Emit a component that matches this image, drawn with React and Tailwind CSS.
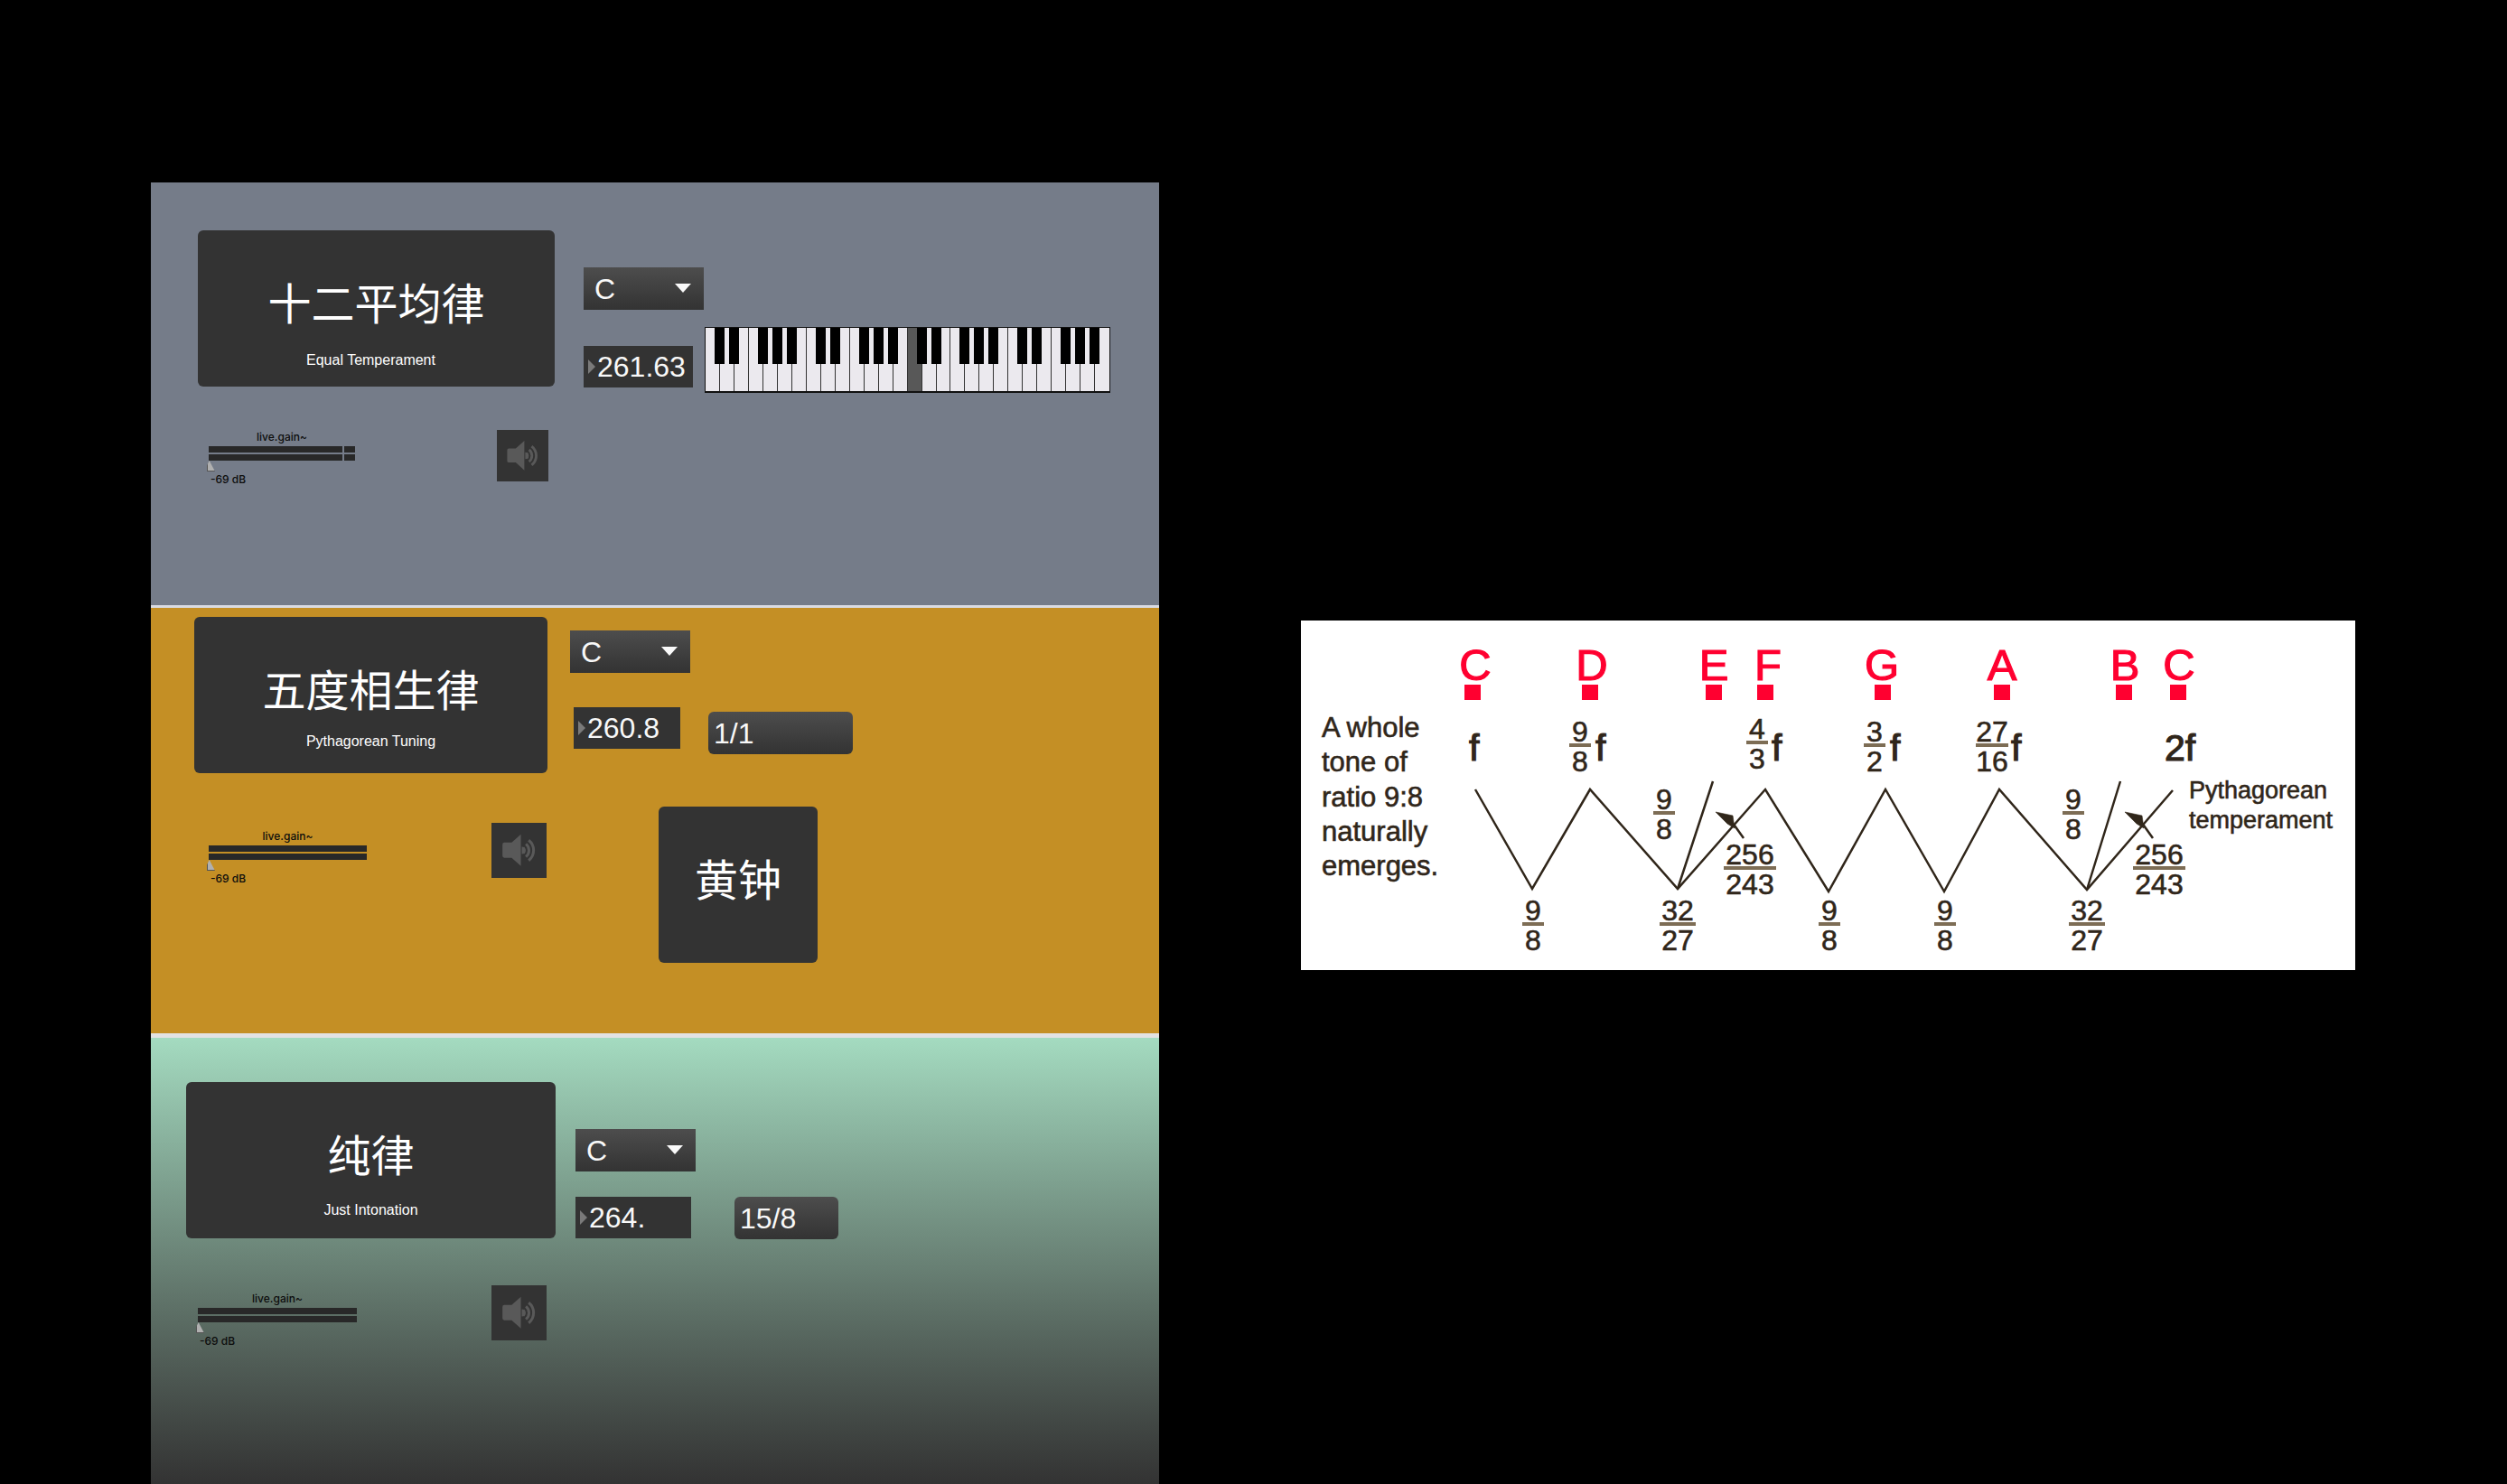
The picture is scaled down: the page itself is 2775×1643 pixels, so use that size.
import React, { useState } from "react";

const HANZI = "font-['Noto_Sans_CJK_SC',sans-serif]";

function TitleCard({ title, subtitle, className, subtitleClass }) {
  return (
    <div className={`flex h-[173px] flex-col items-center rounded-md bg-[#333] pt-12 text-white ${className}`}>
      <h2 className={`text-[48px] leading-[60px] font-normal ${HANZI}`}>{title}</h2>
      {subtitle && <p className={`text-base leading-5 ${subtitleClass}`}>{subtitle}</p>}
    </div>
  );
}

function Gain({ name, className, split }) {
  const bar = (
    <div className="flex h-[7px] gap-[2px]">
      <span className="flex-1 bg-[#282828]" />
      {split && <span className="w-3 bg-[#282828]" />}
    </div>
  );
  return (
    <div className={`text-xs leading-4 font-medium text-[#0c0c0c] font-[Inter,sans-serif] ${className}`}>
      <label htmlFor={name} className="mb-[2px] block text-center">live.gain~</label>
      <div className="flex flex-col gap-[2px]">
        {bar}
        {bar}
      </div>
      <input
        id={name}
        type="range"
        min="-69"
        max="6"
        defaultValue="-69"
        className="-ml-[2px] block h-3 w-full appearance-none bg-transparent [&::-webkit-slider-thumb]:h-3 [&::-webkit-slider-thumb]:w-[9px] [&::-webkit-slider-thumb]:appearance-none [&::-webkit-slider-thumb]:border-b [&::-webkit-slider-thumb]:border-l [&::-webkit-slider-thumb]:border-[#555] [&::-webkit-slider-thumb]:bg-[linear-gradient(62deg,#b0b0b0_58%,#555_60%)] [&::-webkit-slider-thumb]:[clip-path:polygon(0_100%,0_45%,30%_0,100%_100%)]"
      />
      <output htmlFor={name} className="ml-[2px] block pt-px">-69 dB</output>
    </div>
  );
}

function Speaker({ className }) {
  return (
    <button type="button" aria-label="Toggle audio" className={`shrink-0 bg-[#333] ${className}`}>
      <svg viewBox="0 0 60 60" className="size-full" aria-hidden="true">
        <path d="M14 21.500h8L32 12.500v34.500L22 38H14q-2 0-2-2V23.500q0-2 2-2z" fill="#595959" />
        <path d="M33 26a4 4 0 0 1 0 8z" fill="#595959" />
        <g fill="none" stroke="#595959" strokeWidth="3">
          <path d="M37.500 23a9 9 0 0 1 0 14" />
          <path d="M40.500 19a14 14 0 0 1 0 22" />
          <path d="M35 26.500a5 5 0 0 1 0 7" strokeWidth="1.500" />
        </g>
      </svg>
    </button>
  );
}

function NoteSelect({ label, className }) {
  return (
    <div className={`relative h-[47px] w-[133px] ${className}`}>
      <select
        aria-label={label}
        defaultValue="C"
        className="size-full appearance-none bg-linear-to-b from-[#4d4d4d] to-[#333] pl-3 text-[32px] text-[#f8f8f8]"
      >
        {["C", "D", "E", "F", "G", "A", "B"].map((n) => (
          <option key={n}>{n}</option>
        ))}
      </select>
      <svg viewBox="0 0 18 10" className="pointer-events-none absolute top-[18px] right-[14px] h-[10px] w-[18px]" aria-hidden="true">
        <path d="M0 0h18L9 10z" fill="#fafafa" />
      </svg>
    </div>
  );
}

function NumberBox({ label, value, className }) {
  return (
    <label className={`flex h-[46px] shrink-0 items-center bg-[#333] pl-[5px] ${className}`}>
      <svg viewBox="0 0 8 16" className="h-4 w-2 shrink-0" aria-hidden="true">
        <path d="M0 0L8 8L0 16z" fill="#7a7a7a" />
      </svg>
      <input
        aria-label={label}
        defaultValue={value}
        className="ml-[2px] h-full w-full min-w-0 bg-transparent text-[32px] text-[#f8f8f8]"
      />
    </label>
  );
}

function RatioBox({ value, className }) {
  return (
    <input
      aria-label="Frequency ratio"
      defaultValue={value}
      className={`h-[47px] rounded-md bg-linear-to-b from-[#4d4d4d] to-[#333] pl-[6px] text-[32px] text-[#f8f8f8] ${className}`}
    />
  );
}

const NOTES = ["C", "D", "E", "F", "G", "A", "B"];
const SHARPS = ["C", "D", "F", "G", "A"];

function Keyboard() {
  const [active, setActive] = useState(14);
  return (
    <div className="flex h-[73px] min-w-0 flex-1 border border-b-2 border-[#111] bg-[#ebe9ee]">
      {Array.from({ length: 28 }, (_, i) => {
        const note = NOTES[i % 7];
        return (
          <div key={i} className="relative min-w-0 flex-1">
            <button
              type="button"
              aria-label={`${note}${Math.floor(i / 7) + 2}`}
              aria-pressed={active === i}
              onClick={() => setActive(i)}
              className={`block size-full ${i < 27 ? "border-r border-[#333]" : ""} ${active === i ? "bg-[#585858]" : "bg-[#ebe9ee]"}`}
            />
            {SHARPS.includes(note) && (
              <button
                type="button"
                aria-label={`${note} sharp ${Math.floor(i / 7) + 2}`}
                className="absolute top-0 -right-[5px] z-10 h-10 w-[11px] bg-black"
              />
            )}
          </div>
        );
      })}
    </div>
  );
}

function Fraction({ x, y, top, bottom, half = 12 }) {
  return (
    <g textAnchor="middle" fontSize="32">
      <text x={x} y={y - 4}>{top}</text>
      <rect x={x - half} y={y - 2} width={half * 2} height="4" fill="#7d6d55" stroke="none" />
      <text x={x} y={y + 29}>{bottom}</text>
    </g>
  );
}

const DEGREES = [
  ["C", 193, 190],
  ["D", 322, 320],
  ["E", 457, 457],
  ["F", 517, 514],
  ["G", 643, 644],
  ["A", 776, 776],
  ["B", 912, 911],
  ["C", 972, 971],
];

function PythagoreanDiagram() {
  return (
    <svg
      viewBox="0 0 1167 387"
      className="block w-full bg-white"
      role="img"
      aria-label="Pythagorean temperament intervals"
      fontFamily="'Liberation Sans', Arial, sans-serif"
      fill="#30261a"
      stroke="#30261a"
      strokeWidth="0.6"
    >
      <g fill="#ff0030" stroke="#ff0030" strokeWidth="1.2">
        {DEGREES.map(([n, x, sx], i) => (
          <g key={i}>
            <text x={x} y="66" fontSize="49" textAnchor="middle">{n}</text>
            <rect x={sx - 9} y="71" width="18" height="17" stroke="none" />
          </g>
        ))}
      </g>
      <g fontSize="31">
        {["A whole", "tone of", "ratio 9:8", "naturally", "emerges."].map((t, i) => (
          <text key={t} x="23" y={129 + Math.round(i * 38.3)}>{t}</text>
        ))}
      </g>
      <g fontSize="27">
        <text x="983" y="197">Pythagorean</text>
        <text x="983" y="230">temperament</text>
      </g>
      <g fontSize="41" strokeWidth="1.2">
        <text x="186" y="155">f</text>
        <text x="326" y="155">f</text>
        <text x="521" y="155">f</text>
        <text x="652" y="155">f</text>
        <text x="786" y="155">f</text>
        <text x="956" y="155">2f</text>
      </g>
      <Fraction x={309} y={138} top="9" bottom="8" />
      <Fraction x={505} y={135} top="4" bottom="3" />
      <Fraction x={635} y={138} top="3" bottom="2" />
      <Fraction x={765} y={138} top="27" bottom="16" half={18} />
      <Fraction x={402} y={213} top="9" bottom="8" />
      <Fraction x={855} y={213} top="9" bottom="8" />
      <Fraction x={497} y={274} top="256" bottom="243" half={29} />
      <Fraction x={950} y={274} top="256" bottom="243" half={29} />
      <Fraction x={257} y={336} top="9" bottom="8" />
      <Fraction x={417} y={336} top="32" bottom="27" half={20} />
      <Fraction x={585} y={336} top="9" bottom="8" />
      <Fraction x={713} y={336} top="9" bottom="8" />
      <Fraction x={870} y={336} top="32" bottom="27" half={20} />
      <g fill="none" strokeWidth="2.500">
        <path d="M193 187L256 297L320 187L417 297L514 187L584 300L647 187L712 300L773 187L870 298L965 188" />
        <path d="M456 178L417 297M907 178L870 298" />
        <path d="M470 220L480 227L490 241M923 220L933 227L943 241" />
      </g>
      <path d="M459 212L478 216L480 230L472 225z" />
      <path d="M912 212L931 216L933 230L925 225z" />
    </svg>
  );
}

export default function App() {
  return (
    <main className="grid min-h-screen grid-cols-[167fr_1116fr_157fr_1167fr_168fr] bg-black font-['Liberation_Sans',Arial,sans-serif]">
      <div className="col-start-2 flex min-w-0 flex-col pt-[202px]">
        <section className="flex gap-8 border-b-[3px] border-[#d9dbe2] bg-[#757c89] pt-[53px] pr-[54px] pb-[131px] pl-[52px]">
          <div className="w-[395px] shrink-0">
            <TitleCard title="十二平均律" subtitle="Equal Temperament" subtitleClass="mt-[26px] pr-3" />
            <div className="mt-12 flex items-start justify-between pr-[7px] pl-3">
              <Gain name="gain-equal" className="w-[162px]" split />
              <Speaker className="size-[57px]" />
            </div>
          </div>
          <div className="min-w-0 flex-1 pt-[41px]">
            <NoteSelect label="Equal temperament note" />
            <div className="mt-[19px] flex items-start gap-[13px]">
              <NumberBox label="Equal temperament frequency" value="261.63" className="mt-[21px] w-[121px]" />
              <Keyboard />
            </div>
          </div>
        </section>

        <section className="flex gap-[25px] border-b-[5px] border-[#e2e2e2] bg-[#c48f25] pt-[10px] pb-[78px] pl-12">
          <div className="w-[391px] shrink-0">
            <TitleCard title="五度相生律" subtitle="Pythagorean Tuning" subtitleClass="mt-[20px]" />
            <div className="mt-[55px] flex items-start justify-between pr-px pl-4">
              <Gain name="gain-pythagorean" className="mt-[7px] w-[175px]" />
              <Speaker className="size-[61px]" />
            </div>
          </div>
          <div className="min-w-0 flex-1 pt-[15px]">
            <NoteSelect label="Pythagorean note" />
            <div className="mt-[38px] ml-1 flex items-start gap-[31px]">
              <NumberBox label="Pythagorean frequency" value="260.8" className="w-[118px]" />
              <RatioBox value="1/1" className="mt-[5px] w-40" />
            </div>
            <TitleCard title="黄钟" className="mt-[58px] ml-[98px] w-44" />
          </div>
        </section>

        <section className="flex flex-1 gap-[22px] bg-linear-to-b from-[#a4dbc0] to-[#333] pt-[49px] pl-[39px]">
          <div className="w-[409px] shrink-0">
            <TitleCard title="纯律" subtitle="Just Intonation" subtitleClass="mt-[24px]" />
            <div className="mt-[52px] flex items-start justify-between pr-[10px] pl-[13px]">
              <Gain name="gain-just" className="mt-[7px] w-44" />
              <Speaker className="size-[61px]" />
            </div>
          </div>
          <div className="min-w-0 flex-1 pt-[52px]">
            <NoteSelect label="Just intonation note" />
            <div className="mt-7 flex items-start gap-12">
              <NumberBox label="Just intonation frequency" value="264." className="w-32" />
              <RatioBox value="15/8" className="w-[115px]" />
            </div>
          </div>
        </section>
      </div>

      <figure className="col-start-4 min-w-0 pt-[687px]">
        <PythagoreanDiagram />
      </figure>
    </main>
  );
}
